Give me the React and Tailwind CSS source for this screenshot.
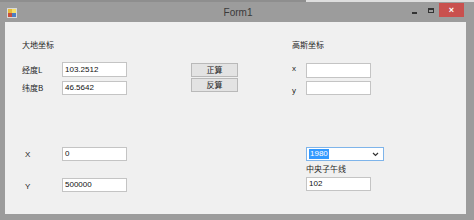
import React from "react";

const cjk = { fontFamily: '"Noto Sans CJK SC", "Noto Sans", sans-serif' };
const lat = { fontFamily: '"Liberation Sans", Arial, sans-serif' };

function Field({ value = "", w = "w-[65px]", h = "h-[15px]" }) {
  return (
    <div
      className={`${w} ${h} bg-white border border-[#c4c4c4] flex items-center pl-[2px] text-[8px] leading-none text-[#111]`}
      style={lat}
    >
      {value}
    </div>
  );
}

function Btn({ children }) {
  return (
    <div
      className="w-[47px] h-[14px] bg-[#e3e3e3] border border-[#b9b9b9] flex items-center justify-center text-[8px] leading-none text-[#222]"
      style={cjk}
    >
      {children}
    </div>
  );
}

function AppIcon() {
  return (
    <svg width="10" height="10" viewBox="0 0 10 10">
      <rect x="0" y="0" width="10" height="10" fill="#d9d9d9" />
      <rect x="1" y="1" width="4" height="4" fill="#e6b93a" />
      <rect x="5" y="1" width="4" height="4" fill="#f3df6a" />
      <rect x="1" y="5" width="4" height="4" fill="#c8503c" />
      <rect x="5" y="5" width="4" height="4" fill="#4d7fc4" />
    </svg>
  );
}

export default function App() {
  return (
    <div className="w-[474px] h-[220px] bg-[#9c9c9c] flex flex-col overflow-hidden">
      {/* top strip */}
      <div className="h-[2px] flex">
        <div className="w-[306px] bg-[#8e8e8e]" />
        <div className="flex-1 bg-[#dedede]" />
      </div>
      {/* title bar */}
      <div className="h-[20px] flex items-center relative">
        <div className="pl-[7px] pt-[2px]">
          <AppIcon />
        </div>
        <div
          className="absolute left-0 right-0 top-0 h-full flex items-center justify-center text-[10px] text-[#3a3a3a] pl-[2px] pointer-events-none"
          style={lat}
        >
          Form1
        </div>
        <div className="ml-auto flex items-start h-full">
          <div className="w-[16px] h-[16px] flex items-center justify-center">
            <div className="w-[5px] h-[2px] bg-[#333] mt-[5px]" />
          </div>
          <div className="w-[17px] h-[16px] flex items-center justify-center">
            <div className="w-[6px] h-[5px] border border-[#333] border-t-2" />
          </div>
          <div
            className="w-[25px] h-[14px] mt-[1px] bg-[#c9504e] flex items-center justify-center text-white text-[9px] leading-none font-bold"
            style={lat}
          >
            ×
          </div>
          <div className="w-[10px]" />
        </div>
      </div>
      {/* client area */}
      <div className="ml-[5px] w-[461px] h-[192px] bg-[#f0f0f0] pl-[17px] text-[#1e1e1e]">
        {/* top section */}
        <div className="flex">
          <div className="w-[169px] pt-[17px]">
            <div className="h-[12px] text-[8px] leading-[12px]" style={cjk}>
              大地坐标
            </div>
            <div className="mt-[11px] flex items-center">
              <div className="w-[40px] text-[8px] leading-none" style={cjk}>
                经度L
              </div>
              <Field value="103.2512" />
            </div>
            <div className="mt-[4px] flex items-center">
              <div className="w-[40px] text-[8px] leading-none" style={cjk}>
                纬度B
              </div>
              <Field value="46.5642" h="h-[14px]" />
            </div>
          </div>
          <div className="pt-[41px] flex flex-col gap-[1px] w-[47px]">
            <Btn>正算</Btn>
            <Btn>反算</Btn>
          </div>
          <div className="ml-[54px] pt-[17px]">
            <div className="h-[12px] text-[8px] leading-[12px]" style={cjk}>
              高斯坐标
            </div>
            <div className="mt-[12px] flex items-center">
              <div className="w-[14px] text-[8px] leading-none pb-[4px]" style={lat}>
                x
              </div>
              <Field />
            </div>
            <div className="mt-[3px] flex items-center">
              <div className="w-[14px] text-[8px] leading-none pt-[6px]" style={lat}>
                y
              </div>
              <Field h="h-[14px]" />
            </div>
          </div>
        </div>
        {/* bottom section */}
        <div className="flex mt-[52px]">
          <div className="w-[284px]">
            <div className="flex items-center">
              <div className="w-[40px] pl-[3px] text-[8px] leading-none pt-[2px]" style={lat}>
                X
              </div>
              <Field value="0" w="w-[65px]" h="h-[14px]" />
            </div>
            <div className="mt-[17px] flex items-center">
              <div className="w-[40px] pl-[3px] text-[8px] leading-none pt-[4px]" style={lat}>
                Y
              </div>
              <Field value="500000" h="h-[14px]" />
            </div>
          </div>
          <div>
            <div className="w-[78px] h-[14px] bg-white border border-[#7eb4ea] flex items-center pl-[2px] pr-[4px]">
              <span
                className="bg-[#3399ff] text-white text-[8px] leading-[10px] px-[1px]"
                style={lat}
              >
                1980
              </span>
              <svg className="ml-auto" width="7" height="5" viewBox="0 0 7 5">
                <path d="M1 1 L3.5 3.5 L6 1" stroke="#333" strokeWidth="1.2" fill="none" />
              </svg>
            </div>
            <div className="h-[16px] flex items-center text-[8px] leading-none" style={cjk}>
              中央子午线
            </div>
            <Field value="102" h="h-[14px]" />
          </div>
        </div>
      </div>
    </div>
  );
}
